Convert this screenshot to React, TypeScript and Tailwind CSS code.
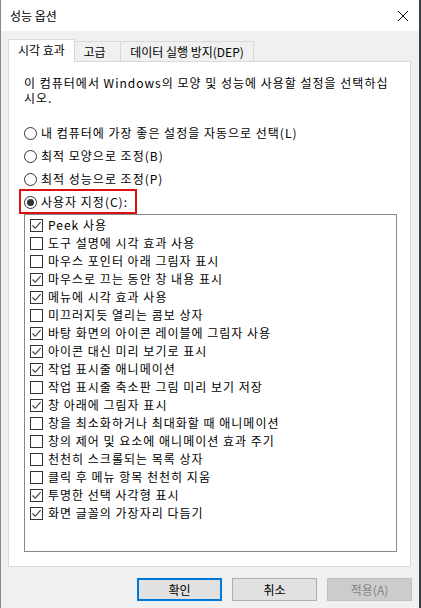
import React from 'react';

const FONT = '[font-family:"Noto_Sans_CJK_KR","Noto_Sans",sans-serif]';

interface Item {
  label: string;
  checked: boolean;
}

const ITEMS: Item[] = [
  { label: 'Peek 사용', checked: true },
  { label: '도구 설명에 시각 효과 사용', checked: false },
  { label: '마우스 포인터 아래 그림자 표시', checked: false },
  { label: '마우스로 끄는 동안 창 내용 표시', checked: true },
  { label: '메뉴에 시각 효과 사용', checked: true },
  { label: '미끄러지듯 열리는 콤보 상자', checked: false },
  { label: '바탕 화면의 아이콘 레이블에 그림자 사용', checked: true },
  { label: '아이콘 대신 미리 보기로 표시', checked: true },
  { label: '작업 표시줄 애니메이션', checked: true },
  { label: '작업 표시줄 축소판 그림 미리 보기 저장', checked: false },
  { label: '창 아래에 그림자 표시', checked: true },
  { label: '창을 최소화하거나 최대화할 때 애니메이션', checked: false },
  { label: '창의 제어 및 요소에 애니메이션 효과 주기', checked: false },
  { label: '천천히 스크롤되는 목록 상자', checked: false },
  { label: '클릭 후 메뉴 항목 천천히 지움', checked: false },
  { label: '투명한 선택 사각형 표시', checked: true },
  { label: '화면 글꼴의 가장자리 다듬기', checked: true },
];

const RADIOS = [
  { label: '내 컴퓨터에 가장 좋은 설정을 자동으로 선택(L)', selected: false },
  { label: '최적 모양으로 조정(B)', selected: false },
  { label: '최적 성능으로 조정(P)', selected: false },
  { label: '사용자 지정(C):', selected: true },
];

function Radio({ selected }: { selected: boolean }) {
  return (
    <span className="flex h-[13px] w-[13px] shrink-0 items-center justify-center rounded-full border border-[#333333] bg-white">
      {selected && <span className="h-[7px] w-[7px] rounded-full bg-[#333333]" />}
    </span>
  );
}

function Checkbox({ checked }: { checked: boolean }) {
  return (
    <span className="flex h-[13px] w-[13px] shrink-0 items-center justify-center border border-[#333333] bg-white">
      {checked && (
        <svg width="11" height="11" viewBox="0 0 11 11">
          <path d="M1.5 5.5 L4.2 8.3 L9.6 2.2" fill="none" stroke="#333333" strokeWidth="1.1" />
        </svg>
      )}
    </span>
  );
}

export default function App() {
  return (
    <div
      className={`flex h-[608px] w-[421px] flex-col overflow-hidden border-l border-l-[#8a8a8a] border-r-2 border-r-[#3a3f46] bg-[#f0f0f0] text-[12px] text-black ${FONT}`}
    >
      {/* title bar */}
      <div className="flex h-[31px] shrink-0 items-center justify-between bg-white pl-[9px] pr-[9px]">
        <span className="leading-none">성능 옵션</span>
        <svg width="12" height="12" viewBox="0 0 12 12" className="mr-[1px]">
          <path d="M1 1 L11 11 M11 1 L1 11" stroke="#111" strokeWidth="1" />
        </svg>
      </div>

      <div className="flex flex-1 flex-col pl-[7px] pt-[8px]">
        {/* tabs */}
        <div className="flex items-end">
          <div className="relative z-10 -mb-px flex h-[23px] w-[67px] items-center justify-center border border-b-0 border-[#d9d9d9] bg-white pb-[2px]">
            시각 효과
          </div>
          <div className="flex h-[20px] w-[46px] items-center justify-center border border-b-0 border-l-0 border-[#d9d9d9] bg-[#f0f0f0] pr-[6px]">
            고급
          </div>
          <div className="flex h-[20px] w-[133px] items-center justify-center border border-b-0 border-l-0 border-[#d9d9d9] bg-[#f0f0f0]">
            데이터 실행 방지(DEP)
          </div>
        </div>

        {/* panel */}
        <div className="flex h-[506px] w-[403px] flex-col border border-[#d9d9d9] bg-white pl-[15px] pt-[13px] tracking-[1px]">
          <p className="w-[372px] leading-[15px]">
            이 컴퓨터에서 Windows의 모양 및 성능에 사용할 설정을 선택하십시오.
          </p>

          <div className="mt-[21px] flex flex-col gap-[9px]">
            {RADIOS.map((r) => (
              <div key={r.label} className="relative flex h-[14px] items-center gap-[4px] leading-none">
                <Radio selected={r.selected} />
                <span>{r.label}</span>
                {r.selected && (
                  <span className="absolute left-[-5px] top-[-6px] h-[25px] w-[118px] border-2 border-[#e01010]" />
                )}
              </div>
            ))}
          </div>

          <div className="mt-[5px] flex h-[338px] w-[373px] flex-col border border-[#828790] pl-[5px] pt-[1px]">
            {ITEMS.map((it) => (
              <div key={it.label} className="flex h-[18px] items-center gap-[5px] leading-none">
                <Checkbox checked={it.checked} />
                <span>{it.label}</span>
              </div>
            ))}
          </div>
        </div>

        {/* buttons */}
        <div className="mt-[11px] flex justify-end gap-[10px] pr-[7px]">
          <button className="flex h-[23px] w-[85px] items-center justify-center border-2 border-[#0078d7] bg-[#e1e1e1] leading-none">
            확인
          </button>
          <button className="flex h-[23px] w-[85px] items-center justify-center border border-[#adadad] bg-[#e1e1e1] leading-none">
            취소
          </button>
          <button className="flex h-[23px] w-[85px] items-center justify-center border border-[#bfbfbf] bg-[#cccccc] leading-none text-[#838383]">
            적용(A)
          </button>
        </div>
      </div>
    </div>
  );
}
